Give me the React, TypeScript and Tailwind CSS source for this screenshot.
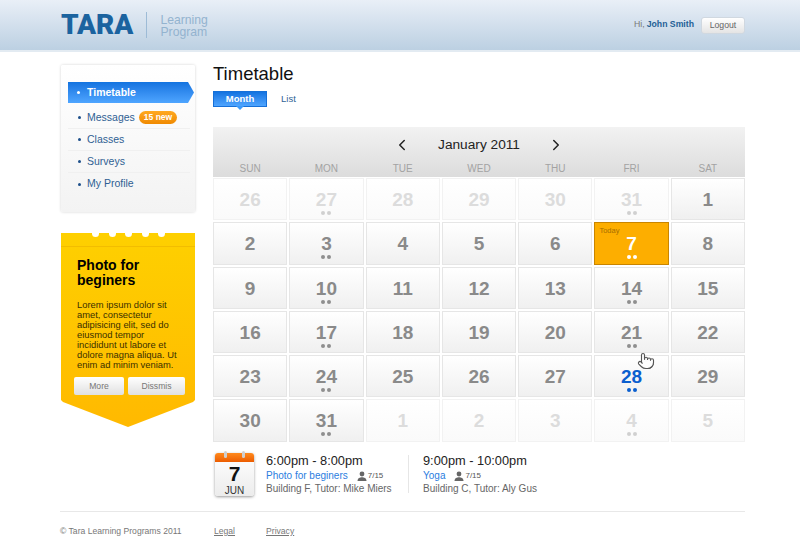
import React from 'react';
import { ChevronLeft, ChevronRight, Pointer } from 'lucide-react';

type Day = { n: number; muted?: boolean; dots?: boolean; today?: boolean; active?: boolean };

const weekdays = ['SUN', 'MON', 'TUE', 'WED', 'THU', 'FRI', 'SAT'];

const days: Day[] = [
  { n: 26, muted: true },
  { n: 27, muted: true, dots: true },
  { n: 28, muted: true },
  { n: 29, muted: true },
  { n: 30, muted: true },
  { n: 31, muted: true, dots: true },
  { n: 1 },
  { n: 2 },
  { n: 3, dots: true },
  { n: 4 },
  { n: 5 },
  { n: 6 },
  { n: 7, today: true, dots: true },
  { n: 8 },
  { n: 9 },
  { n: 10, dots: true },
  { n: 11 },
  { n: 12 },
  { n: 13 },
  { n: 14, dots: true },
  { n: 15 },
  { n: 16 },
  { n: 17, dots: true },
  { n: 18 },
  { n: 19 },
  { n: 20 },
  { n: 21, dots: true },
  { n: 22 },
  { n: 23 },
  { n: 24, dots: true },
  { n: 25 },
  { n: 26 },
  { n: 27 },
  { n: 28, dots: true, active: true },
  { n: 29 },
  { n: 30 },
  { n: 31, dots: true },
  { n: 1, muted: true },
  { n: 2, muted: true },
  { n: 3, muted: true },
  { n: 4, muted: true, dots: true },
  { n: 5, muted: true },
];

function DayCell({ day }: { day: Day }) {
  let box = 'border-[#e6e6e6] bg-gradient-to-b from-white to-[#f0f0f0] text-[#8a8a8a]';
  let dot = 'bg-[#8f8f8f]';
  if (day.muted) {
    box = 'border-[#f2f2f2] bg-gradient-to-b from-white to-[#fafafa] text-[#dcdcdc]';
    dot = 'bg-[#d0d0d0]';
  }
  if (day.today) {
    box = 'border-[#c98500] bg-[#fdae00] text-white';
    dot = 'bg-white';
  }
  if (day.active) {
    box = 'border-[#e6e6e6] bg-gradient-to-b from-white to-[#f0f0f0] text-[#0b5fcf]';
    dot = 'bg-[#0b5fcf]';
  }
  return (
    <div className={`relative flex h-[42.3px] flex-col items-center border pt-[9px] ${box}`}>
      {day.today && (
        <span className="absolute left-[4px] top-[3px] text-[7.5px] leading-[10px] text-[#a86f00]">Today</span>
      )}
      <span className="text-[19px] font-bold leading-[23px]">{day.n}</span>
      {day.dots && (
        <div className="flex gap-[2px]">
          <span className={`h-[4px] w-[4px] rounded-full ${dot}`} />
          <span className={`h-[4px] w-[4px] rounded-full ${dot}`} />
        </div>
      )}
    </div>
  );
}

function NavItem({ label, badge, last }: { label: string; badge?: string; last?: boolean }) {
  return (
    <div className={`flex h-[22px] items-center pl-[10px] text-[10.5px] text-[#2f5f93] ${last ? '' : 'border-b border-[#f0f0f0]'}`}>
      <span className="mr-[6px] h-[3px] w-[3px] rounded-full bg-[#1d4f8a]" />
      {label}
      {badge && (
        <span className="ml-[4px] rounded-full bg-gradient-to-b from-[#ffa91f] to-[#f08a00] px-[5px] text-[8.5px] font-bold leading-[13px] text-white">
          {badge}
        </span>
      )}
    </div>
  );
}

function PersonIcon() {
  return (
    <svg width="10" height="10" viewBox="0 0 10 10" className="fill-[#666]">
      <circle cx="5" cy="3" r="2.4" />
      <path d="M0.5 10 C0.5 7 3 6.2 5 6.2 C7 6.2 9.5 7 9.5 10 Z" />
    </svg>
  );
}

function Session({ time, title, place }: { time: string; title: string; place: string }) {
  return (
    <div>
      <div className="text-[12.8px] leading-[16px] text-[#222]">{time}</div>
      <div className="flex items-center gap-[9px] text-[10px] leading-[13px] text-[#2b7de0]">
        {title}
        <span className="flex items-center gap-[1px] text-[8px] text-[#555]">
          <PersonIcon />
          7/15
        </span>
      </div>
      <div className="text-[10px] leading-[13px] text-[#666]">{place}</div>
    </div>
  );
}

export default function App() {
  return (
    <div className="relative h-[556px] w-[800px] overflow-hidden bg-white font-['Liberation_Sans',Arial,sans-serif]">
      {/* Header */}
      <header className="flex h-[52px] items-center justify-between border-b-2 border-[#e3ebf2] bg-gradient-to-b from-[#e9eff7] to-[#bcd0e2] pl-[61px] pr-[55px]">
        <div className="flex items-center">
          <span className="font-['Roboto',sans-serif] text-[28px] font-black leading-[36px] text-[#1b639f]">TARA</span>
          <span className="ml-[13px] h-[26px] w-px bg-[#9dbbd6]" />
          <span className="ml-[13px] pt-[1px] text-[12.2px] leading-[12px] text-[#93b3cf]">
            Learning
            <br />
            Program
          </span>
        </div>
        <div className="flex items-center">
          <span className="text-[8.7px] text-[#777]">Hi,</span>
          <span className="ml-[2px] text-[8.7px] font-bold text-[#245f96]">John Smith</span>
          <button className="ml-[7px] h-[17px] w-[44px] rounded-[3px] border border-[#d0d8e0] bg-gradient-to-b from-white to-[#e4e4e4] text-[8.7px] leading-none text-[#666]">
            Logout
          </button>
        </div>
      </header>

      <div className="flex pl-[61px] pr-[55px] pt-[13px]">
        {/* Sidebar */}
        <aside className="w-[134px] shrink-0">
          <div className="h-[147px] rounded-[2px] bg-gradient-to-b from-white to-[#f3f3f3] pl-[7px] pr-[5px] pt-[17px] shadow-[0_0_3px_rgba(0,0,0,0.18)]">
            <div className="mb-[3px] flex h-[21px] w-[126px] items-center bg-gradient-to-b from-[#1273e0] to-[#4ea5ff] pl-[9px] text-[10.5px] font-bold text-white [clip-path:polygon(0_0,120px_0,100%_50%,120px_100%,0_100%)]">
              <span className="mr-[7px] h-[3px] w-[3px] rounded-full bg-white" />
              Timetable
            </div>
            <div className="pt-[1px]">
              <NavItem label="Messages" badge="15 new" />
              <NavItem label="Classes" />
              <NavItem label="Surveys" />
              <NavItem label="My Profile" last />
            </div>
          </div>

          {/* Promo card */}
          <div className="relative mt-[21px] h-[194px] bg-gradient-to-b from-[#fed000] to-[#ffb900] px-[16px] pt-[25px] [clip-path:polygon(0_0,100%_0,100%_167px,132px_169px,50%_100%,2px_169px,0_167px)]">
            <div className="absolute inset-x-0 top-[13px] h-px bg-[#f2bd00]" />
            <div className="absolute left-[31px] top-[-3px] flex gap-[9.5px]">
              <span className="h-[7px] w-[7px] rounded-full bg-white" />
              <span className="h-[7px] w-[7px] rounded-full bg-white" />
              <span className="h-[7px] w-[7px] rounded-full bg-white" />
              <span className="h-[7px] w-[7px] rounded-full bg-white" />
              <span className="h-[7px] w-[7px] rounded-full bg-white" />
            </div>
            <h2 className="text-[14px] font-bold leading-[15px] text-black">
              Photo for
              <br />
              beginers
            </h2>
            <p className="mt-[12px] w-[104px] text-[9.4px] leading-[10px] text-[#3a3000]">
              Lorem ipsum dolor sit amet, consectetur adipisicing elit, sed do eiusmod tempor incididunt ut labore et dolore magna aliqua. Ut enim ad minim veniam.
            </p>
            <div className="-ml-[3px] mt-[7px] flex gap-[4px]">
              <button className="h-[18px] w-[50px] shrink-0 rounded-[2px] bg-gradient-to-b from-white to-[#e0e0e0] text-[8.6px] leading-none text-[#777]">More</button>
              <button className="h-[18px] w-[57px] shrink-0 rounded-[2px] bg-gradient-to-b from-white to-[#e0e0e0] text-[8.6px] leading-none text-[#777]">Dissmis</button>
            </div>
          </div>
        </aside>

        {/* Main */}
        <main className="ml-[18px] w-[532px]">
          <h1 className="text-[18.5px] leading-[18px] text-[#111]">Timetable</h1>
          <div className="mt-[8px] flex items-center">
            <div className="relative flex h-[16px] w-[54px] items-center justify-center border border-[#1670d8] bg-gradient-to-b from-[#1273e0] to-[#4ea5ff] text-[9.5px] font-bold text-white">
              Month
              <span className="absolute left-[22px] top-[14px] h-0 w-0 border-x-[4px] border-t-[4px] border-x-transparent border-t-[#3d9af8]" />
            </div>
            <span className="ml-[14px] text-[9.5px] text-[#2f6496]">List</span>
          </div>

          <section className="mt-[20px]">
            <div className="bg-gradient-to-b from-[#f2f2f2] to-[#dcdcdc]">
              <div className="flex h-[36px] items-center justify-center">
                <ChevronLeft className="h-[18px] w-[18px] text-[#222]" strokeWidth={2} />
                <span className="w-[136px] text-center text-[13.7px] text-[#222]">January 2011</span>
                <ChevronRight className="h-[18px] w-[18px] text-[#222]" strokeWidth={2} />
              </div>
              <div className="grid h-[14px] grid-cols-7 gap-[2px]">
                {weekdays.map((w) => (
                  <div key={w} className="text-center text-[10px] leading-[11px] text-[#a3a3a3]">
                    {w}
                  </div>
                ))}
              </div>
            </div>
            <div className="mt-[1px] grid grid-cols-7 gap-[2px]">
              {days.map((d, i) => (
                <DayCell key={i} day={d} />
              ))}
            </div>
          </section>

          <div className="mt-[11px] flex items-center pl-[2px]">
            <div className="relative w-[39px] rounded-[3px] bg-gradient-to-b from-white to-[#ececec] text-center shadow-[0_1px_3px_rgba(0,0,0,0.4)]">
              <div className="h-[9px] rounded-t-[3px] bg-gradient-to-b from-[#ff8a1c] to-[#ec5c00]" />
              <span className="absolute left-[9px] top-[-2px] h-[7px] w-[3px] rounded-full bg-[#cfcfcf]" />
              <span className="absolute left-[27px] top-[-2px] h-[7px] w-[3px] rounded-full bg-[#cfcfcf]" />
              <div className="text-[21px] font-bold leading-[23px] text-[#111]">7</div>
              <div className="text-[10px] leading-[11px] text-[#333]">JUN</div>
            </div>
            <div className="ml-[12px] w-[142px]">
              <Session time="6:00pm - 8:00pm" title="Photo for beginers" place="Building F, Tutor: Mike Miers" />
            </div>
            <div className="mr-[14px] h-[38px] w-px bg-[#e6e6e6]" />
            <Session time="9:00pm - 10:00pm" title="Yoga" place="Building C, Tutor: Aly Gus" />
          </div>
        </main>
      </div>

      {/* Footer */}
      <footer className="ml-[60px] mr-[55px] mt-[15px] flex items-center border-t border-[#e8e8e8] pt-[13px] text-[8.6px] leading-[12px] text-[#777]">
        <span className="w-[154px]">© Tara Learning Programs 2011</span>
        <a className="underline">Legal</a>
        <a className="ml-[31px] underline">Privacy</a>
      </footer>

      {/* Mouse pointer */}
      <Pointer className="absolute left-[637px] top-[352px] h-[18px] w-[18px] fill-white text-[#555]" strokeWidth={1.5} />
    </div>
  );
}
